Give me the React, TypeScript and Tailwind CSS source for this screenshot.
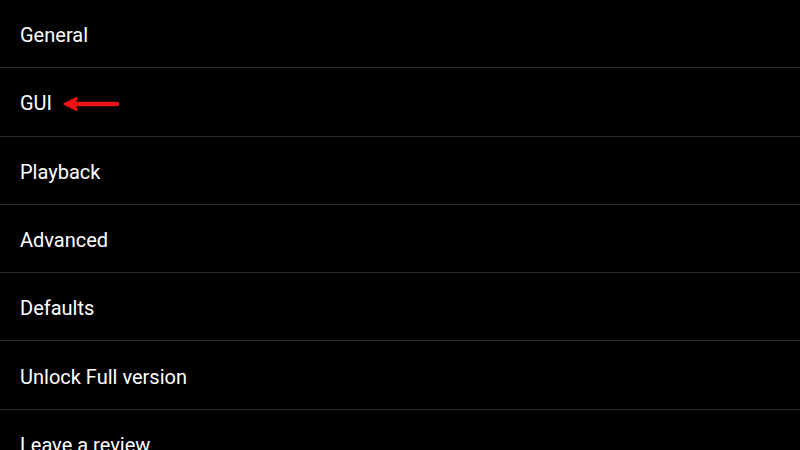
const items = [
  "General",
  "GUI",
  "Playback",
  "Advanced",
  "Defaults",
  "Unlock Full version",
  "Leave a review",
];

export default function App() {
  return (
    <div className="h-[450px] w-[800px] overflow-hidden bg-black font-['Roboto',sans-serif] text-white">
      {items.map((label) => (
        <div
          key={label}
          className="flex h-[68.3px] items-center border-b border-[#2b2b2b] px-5 pt-[3px] text-[20px]"
        >
          <span>{label}</span>
          {label === "GUI" && (
            <svg width="57" height="16" viewBox="0 0 57 16" className="ml-[11px] mt-[1px]">
              <path d="M12 8 H54" stroke="#ec1414" strokeWidth="4.5" strokeLinecap="round" />
              <path d="M1 8 L14 1.5 L11.5 8 L14 14.5 Z" fill="#ec1414" stroke="#ec1414" strokeWidth="1.5" strokeLinejoin="round" />
            </svg>
          )}
        </div>
      ))}
    </div>
  );
}
